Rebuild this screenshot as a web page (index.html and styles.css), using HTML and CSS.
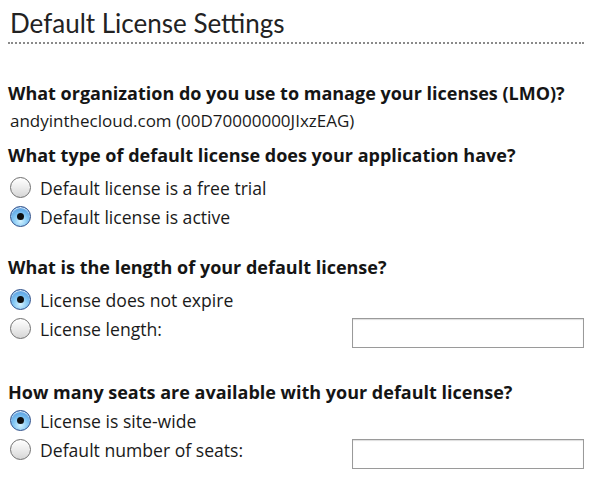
FILE: index.html
```html
<!DOCTYPE html>
<html lang="en">
<head>
	<meta charset="UTF-8">
	<title>Default License Settings</title>
	<link rel="stylesheet" href="styles.css">
</head>
<body>
<div class="wrap">
	<h1 class="title">Default License Settings</h1>

	<div class="section first">
		<h3 class="question">What organization do you use to manage your licenses (LMO)?</h3>
		<p class="answer">andyinthecloud.com (00D70000000JIxzEAG)</p>
	</div>

	<div class="section">
		<h3 class="question">What type of default license does your application have?</h3>
		<label class="option"><input type="radio" name="type"> Default license is a free trial</label>
		<label class="option"><input type="radio" name="type" checked> Default license is active</label>
	</div>

	<div class="section gap">
		<h3 class="question">What is the length of your default license?</h3>
		<label class="option"><input type="radio" name="length" checked> License does not expire</label>
		<div class="option">
			<label><input type="radio" name="length"> License length:</label>
			<input type="text" class="field">
		</div>
	</div>

	<div class="section last">
		<h3 class="question">How many seats are available with your default license?</h3>
		<label class="option"><input type="radio" name="seats" checked> License is site-wide</label>
		<div class="option">
			<label><input type="radio" name="seats"> Default number of seats:</label>
			<input type="text" class="field">
		</div>
	</div>
</div>
</body>
</html>
```

FILE: styles.css
```css
body{
	margin: 0;
	background: #fff;
	color: #1a1a1a;
	font-family: "Open Sans", "Noto Sans", sans-serif;
}
.wrap{
	padding: 7px 15px 30px 8px;
}
.title{
	margin: 0;
	padding: 0 0 0 2px;
	font-family: Lato, "Noto Sans", sans-serif;
	font-weight: 400;
	font-size: 26px;
	line-height: 32px;
	color: #222;
	border-bottom: 2px dotted #8a8a8a;
	height: 35px;
}
.section{
	margin-top: 10px;
}
.section.first{
	margin-top: 37px;
}
.section.gap{
	margin-top: 24px;
}
.section.last{
	margin-top: 37px;
}
.question{
	margin: 0 0 6px;
	font-size: 18px;
	line-height: 24px;
	font-weight: 700;
	color: #151515;
}
.section.last .question{
	margin-bottom: 2px;
}
.answer{
	margin: -2px 0 0 2px;
	font-size: 17px;
	line-height: 24px;
}
.option{
	display: flex;
	align-items: center;
	height: 29px;
	font-size: 17.6px;
	padding-left: 2px;
}
.option label{
	display: flex;
	align-items: center;
}
.option input[type=radio]{
	-webkit-appearance: none;
	appearance: none;
	width: 21px;
	height: 21px;
	margin: 0 9px 0 0;
	border-radius: 50%;
	border: 1px solid #6f6f6f;
	background: linear-gradient(#ffffff, #ececec 50%, #d6d6d6);
	box-shadow: inset 0 1px 1px rgba(255,255,255,.9);
	position: relative;
}
.option input[type=radio]:checked{
	border-color: #2d4f8a;
	background: radial-gradient(circle at 50% 75%, #d4f2ff 0, #86c9f4 40%, #3b86d6 100%);
}
.option input[type=radio]:checked::after{
	content: "";
	position: absolute;
	left: 6px;
	top: 6px;
	width: 7px;
	height: 7px;
	border-radius: 50%;
	background: #0d0d0d;
}
.field{
	margin: 9px 0 0 auto;
	width: 232px;
	height: 30px;
	box-sizing: border-box;
	border: 1px solid #9a9a9a;
	box-shadow: inset 0 1px 1px #ddd;
}
```
